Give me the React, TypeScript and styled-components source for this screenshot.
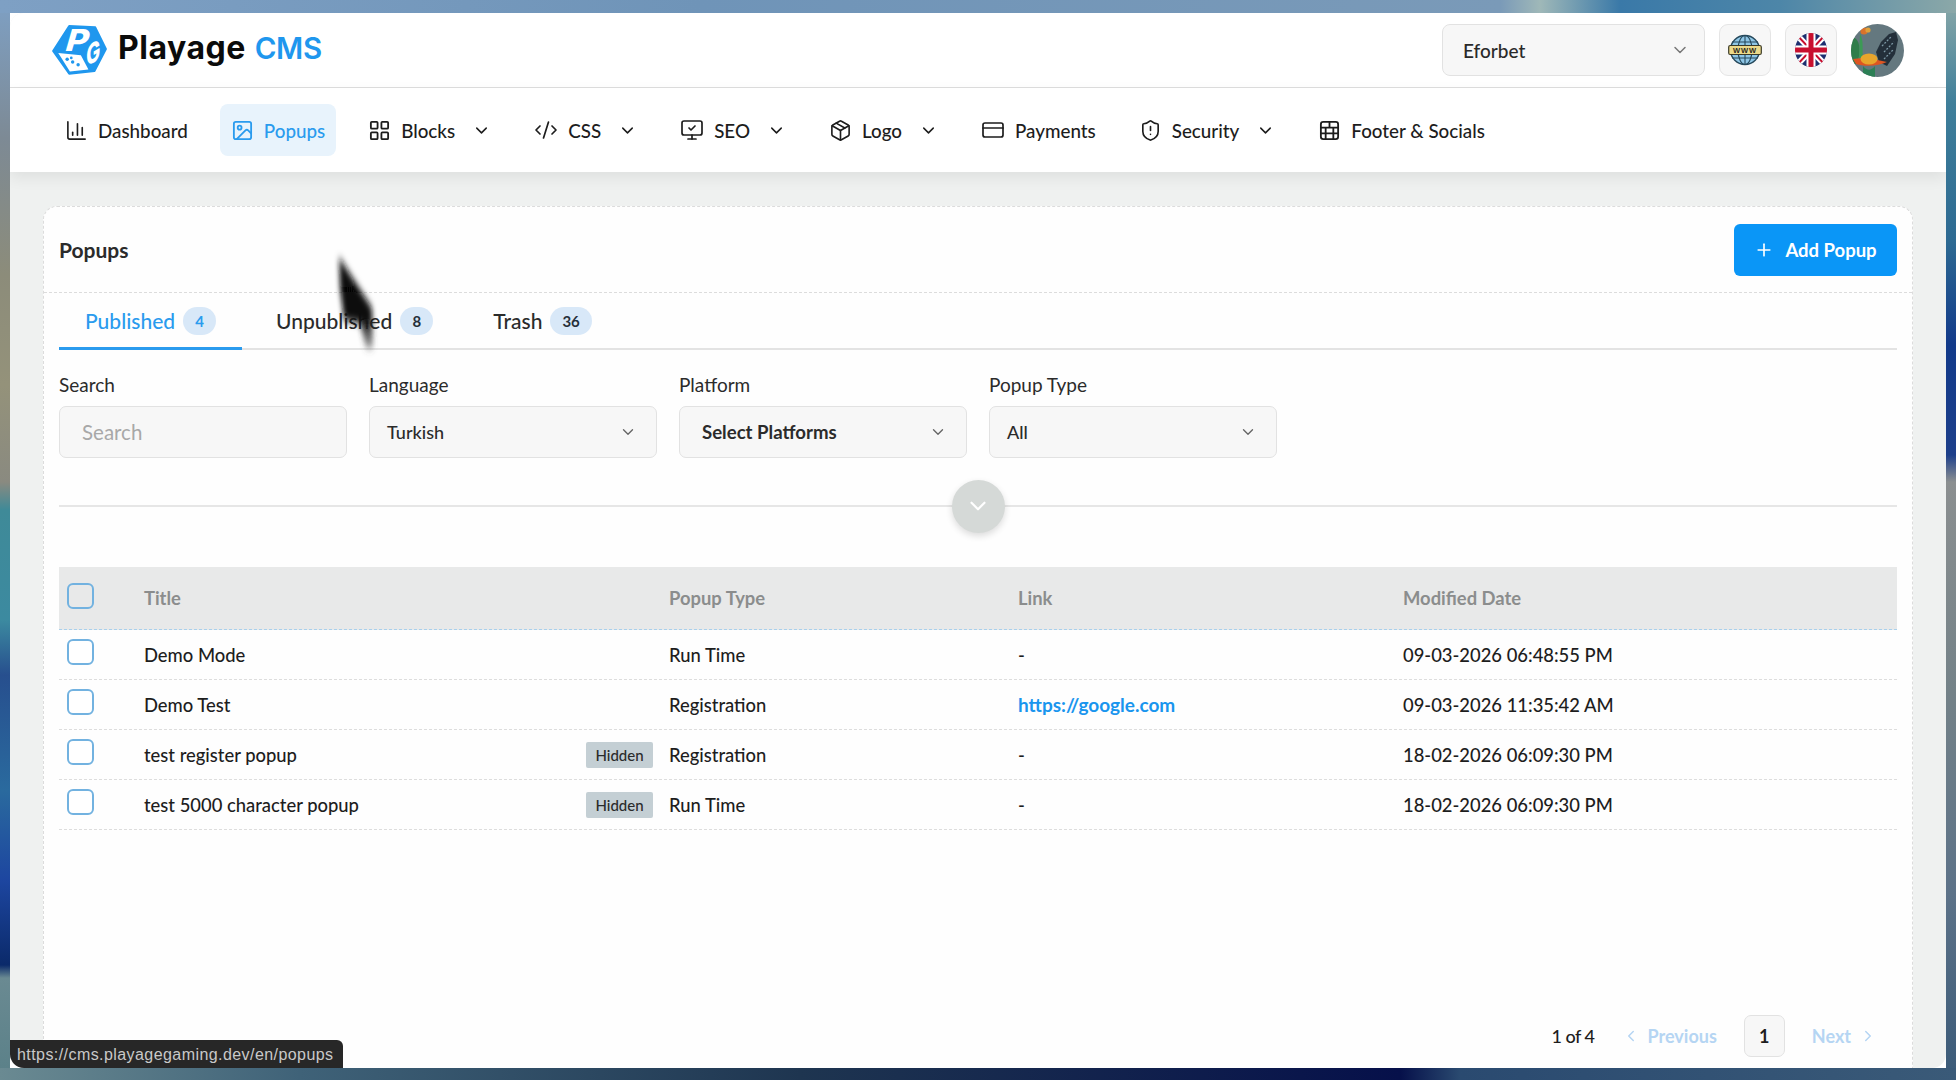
import React from "react";
import styled, { createGlobalStyle } from "styled-components";
import {
  ChartColumn,
  ChevronDown,
  ChevronLeft,
  ChevronRight,
  CodeXml,
  CreditCard,
  Image as ImageIcon,
  LayoutGrid,
  MonitorCheck,
  Package,
  Plus,
  ShieldAlert,
} from "lucide-react";

const GlobalStyle = createGlobalStyle`
  html, body {
    margin: 0;
    padding: 0;
    height: 100%;
  }
  body {
    font-family: "Lato", "Noto Sans", sans-serif;
    color: #1c1c1c;
    overflow: hidden;
  }
  * {
    box-sizing: border-box;
  }
`;

const Desktop = styled.div`
  width: 1956px;
  height: 1080px;
  padding: 13px 10px 12px;
  background:
    linear-gradient(90deg, #7ea0c4 0, #6f94b8 700px, #7a9ab8 1500px, #9fb8b8 1540px, #3a79a8 1620px, #4d86a8 1780px, #8ba8a8 1956px) top / 100% 13px no-repeat,
    linear-gradient(90deg, #6a8a92 0, #3f6278 300px, #1e3550 800px, #06104a 1400px, #2a4a70 1460px, #3a5a78 1956px) bottom / 100% 12px no-repeat,
    linear-gradient(180deg, #7ea0c4 0, #7d8a95 138px, #8c8c7a 275px, #94927a 385px, #8a8a80 482px, #3f8a98 510px, #3c8aa0 620px, #274f8e 675px, #2a6a9e 790px, #1d46a0 880px, #0b2a6a 965px, #6a8a92 978px, #5a8088 1080px) left / 10px 100% no-repeat,
    linear-gradient(180deg, #8aa8a8 0, #3f7f9a 103px, #2d6a92 240px, #123a8a 345px, #1d3f8a 455px, #8b8f90 482px, #748288 690px, #5c7288 895px, #3a5a78 1080px) right / 10px 100% no-repeat;
`;

const Browser = styled.div`
  position: relative;
  width: 1936px;
  height: 1055px;
  display: flex;
  flex-direction: column;
  background: #eff1f0;
  border-radius: 14px;
  overflow: hidden;
`;

const TopBar = styled.header`
  height: 75px;
  flex: none;
  display: flex;
  align-items: center;
  justify-content: space-between;
  padding: 0 42px;
  background: #fff;
  border-bottom: 1px solid #dedede;
`;

const Brand = styled.div`
  display: flex;
  align-items: center;
  gap: 11px;
`;

const BrandMark = styled.svg`
  overflow: visible;
`;

const BrandText = styled.div`
  padding-bottom: 5px;
`;

const BrandName = styled.span`
  font-family: "Inter", sans-serif;
  font-size: 32px;
  font-weight: 700;
  letter-spacing: 0.5px;
  color: #0b0b0b;
`;

const BrandAccent = styled.span`
  font-family: "Inter", sans-serif;
  font-size: 29.5px;
  font-weight: 600;
  margin-left: 9px;
  letter-spacing: -0.4px;
  color: #1f97ee;
`;

const TopActions = styled.div`
  display: flex;
  align-items: center;
`;

const SiteSelect = styled.div`
  width: 263px;
  height: 52px;
  display: flex;
  align-items: center;
  justify-content: space-between;
  padding: 0 14px 0 20px;
  margin-right: 14px;
  background: #f7f7f7;
  border: 1px solid #e2e2e2;
  border-radius: 8px;
  font-size: 19px;
  font-weight: 500;
  color: #2a2a2a;
`;

const IconTile = styled.div`
  width: 52px;
  height: 52px;
  display: flex;
  align-items: center;
  justify-content: center;
  margin-right: 14px;
  background: #f7f7f7;
  border: 1px solid #e5e5e5;
  border-radius: 9px;
`;

const Avatar = styled.svg`
  width: 53px;
  height: 53px;
  border-radius: 50%;
  display: block;
`;

const NavBar = styled.nav`
  position: relative;
  height: 84px;
  flex: none;
  display: flex;
  align-items: center;
  gap: 21px;
  padding: 0 44px;
  background: #fff;
  box-shadow: 0 6px 14px rgba(0, 0, 0, 0.07);
`;

const NavItem = styled.div<{ $active?: boolean }>`
  height: 52px;
  display: flex;
  align-items: center;
  gap: 10px;
  padding: 0 11px;
  border-radius: 8px;
  font-size: 18.8px;
  font-weight: 500;
  color: ${(p) => (p.$active ? "#2a9bee" : "#1d1d1d")};
  background: ${(p) => (p.$active ? "#e8f3fc" : "transparent")};
`;

const NavCaret = styled.span`
  display: flex;
  margin-left: 7px;
`;

const Main = styled.main`
  flex: 1;
  min-height: 0;
  display: flex;
  padding: 34px 33px 0;
`;

const Card = styled.section`
  flex: 1;
  display: flex;
  flex-direction: column;
  padding: 0 15px 11px;
  background: #fefefe;
  border: 1px dashed #dcdcdc;
  border-bottom: none;
  border-radius: 14px 14px 0 0;
`;

const CardHead = styled.div`
  height: 86px;
  margin: 0 -15px;
  padding: 0 15px;
  flex: none;
  display: flex;
  align-items: center;
  justify-content: space-between;
  border-bottom: 1px dashed #dcdcdc;
`;

const CardTitle = styled.h1`
  margin: 0;
  font-size: 21px;
  font-weight: 700;
  color: #2b2b2b;
`;

const AddButton = styled.button`
  width: 163px;
  height: 52px;
  display: flex;
  align-items: center;
  justify-content: center;
  gap: 11px;
  border: none;
  border-radius: 6px;
  background: #0a96f7;
  color: #fff;
  font-family: inherit;
  font-size: 18.5px;
  font-weight: 700;
`;

const TabRow = styled.div`
  height: 57px;
  flex: none;
  display: flex;
  gap: 8px;
  border-bottom: 2px solid #e3e3e3;
`;

const Tab = styled.div<{ $active?: boolean }>`
  height: 57px;
  display: flex;
  align-items: center;
  gap: 8px;
  padding: 1px 26px 0;
  font-size: 21px;
  font-weight: 500;
  color: ${(p) => (p.$active ? "#2a9bee" : "#2b2b2b")};
  border-bottom: 3px solid ${(p) => (p.$active ? "#2a9bee" : "transparent")};
`;

const Count = styled.span<{ $active?: boolean }>`
  min-width: 33px;
  height: 28px;
  padding: 0 12px;
  display: flex;
  align-items: center;
  justify-content: center;
  border-radius: 14px;
  background: #d8e8f8;
  font-size: 15px;
  font-weight: 700;
  color: ${(p) => (p.$active ? "#2a9bee" : "#26303a")};
`;

const Filters = styled.div`
  display: grid;
  grid-template-columns: repeat(4, 288px);
  gap: 22px;
  margin-top: 22px;
`;

const Field = styled.div`
  display: flex;
  flex-direction: column;
  gap: 9px;
`;

const FieldLabel = styled.label`
  height: 25px;
  line-height: 25px;
  font-size: 19px;
  color: #2b2b2b;
`;

const SelectBox = styled.div<{ $bold?: boolean; $inset: number }>`
  height: 52px;
  display: flex;
  align-items: center;
  justify-content: space-between;
  padding: 0 19px 0 ${(p) => p.$inset}px;
  background: #f7f7f7;
  border: 1px solid #e2e2e2;
  border-radius: 7px;
  font-size: ${(p) => (p.$bold ? "18.6px" : "18px")};
  font-weight: ${(p) => (p.$bold ? 700 : 500)};
  color: #2b2b2b;
`;

const SearchBox = styled(SelectBox)`
  font-size: 20.5px;
  font-weight: 400;
  color: #a8a8a8;
`;

const Divider = styled.div`
  height: 2px;
  flex: none;
  margin-top: 47px;
  background: #e6e6e6;
  display: flex;
  align-items: center;
  justify-content: center;
`;

const CollapseToggle = styled.div`
  width: 53px;
  height: 53px;
  flex: none;
  display: flex;
  align-items: center;
  justify-content: center;
  border-radius: 50%;
  background: #d5d9d7;
  box-shadow: 0 3px 7px rgba(0, 0, 0, 0.14);
`;

const TableGrid = styled.div`
  flex: 1;
  margin-top: 60px;
`;

const Row = styled.div<{ $head?: boolean }>`
  display: grid;
  grid-template-columns: 85px 525px 349px 385px 1fr;
  align-items: center;
  height: ${(p) => (p.$head ? "63px" : "50px")};
  background: ${(p) => (p.$head ? "#e8e9e9" : "transparent")};
  border-bottom: 1px dashed ${(p) => (p.$head ? "#a9d0ec" : "#dddddd")};
  font-size: 18.4px;
  font-weight: ${(p) => (p.$head ? 700 : 500)};
  color: ${(p) => (p.$head ? "#8b8d8d" : "#1d1d1d")};
`;

const CheckCell = styled.div`
  padding-left: 8px;
  display: flex;
  padding-bottom: 5px;
`;

const CheckBox = styled.span`
  width: 27px;
  height: 26px;
  border: 2px solid #72b2e0;
  border-radius: 6px;
  background: #fff;
`;

const HeadCheckBox = styled(CheckBox)`
  background: transparent;
`;

const TitleCell = styled.div`
  display: flex;
  align-items: center;
  justify-content: space-between;
  padding-right: 16px;
`;

const HiddenTag = styled.span`
  width: 67px;
  height: 26px;
  display: flex;
  align-items: center;
  justify-content: center;
  background: #c4cfd4;
  border-radius: 2px;
  font-size: 15px;
  color: #2b2b2b;
`;

const RowLink = styled.a`
  font-size: 19px;
  font-weight: 700;
  color: #1995ee;
  text-decoration: none;
`;

const Pager = styled.div`
  flex: none;
  display: flex;
  align-items: center;
  justify-content: flex-end;
  height: 42px;
  padding-right: 20px;
  font-size: 18px;
  font-weight: 500;
`;

const PageInfo = styled.span`
  color: #1d1d1d;
  margin-right: 27px;
  letter-spacing: -0.5px;
`;

const PagerLink = styled.span`
  display: flex;
  align-items: center;
  gap: 8px;
  font-weight: 700;
  color: #b5d5f3;
`;

const PageBox = styled.span`
  width: 41px;
  height: 42px;
  margin: 0 27px;
  display: flex;
  align-items: center;
  justify-content: center;
  background: #f7f7f7;
  border: 1px solid #e2e2e2;
  border-radius: 7px;
  font-weight: 700;
  color: #1d1d1d;
`;

// link preview the browser shows while hovering a nav item
const StatusTip = styled.div`
  position: absolute;
  left: 0;
  bottom: 0;
  width: 333px;
  height: 28px;
  display: flex;
  align-items: center;
  padding: 2px 0 0 7px;
  background: #272727;
  border-radius: 0 6px 0 10px;
  font-family: "Liberation Sans", sans-serif;
  font-size: 16px;
  letter-spacing: 0.43px;
  color: #c9c9c9;
`;

const CursorTrail = styled.svg`
  position: absolute;
  left: 320px;
  top: 235px;
`;

function FooterIcon() {
  return (
    <svg width="23" height="23" viewBox="0 0 24 24" fill="none" stroke="#1d1d1d" strokeWidth="1.9" strokeLinecap="round" strokeLinejoin="round">
      <rect x="3" y="3" width="18" height="18" rx="2.5" />
      <path d="M3 9h18M3 15h18M12 3v6M8 15v6M16 15v6M8 9v6M16 9v6" />
    </svg>
  );
}

function Logo() {
  return (
    <BrandMark width="55" height="50" viewBox="0 0 160 146">
      <path d="M50 3 L126 7 L157 70 L124 134 L50 142 L3 76 Z" fill="#1f97ee" stroke="#1f97ee" strokeWidth="6" strokeLinejoin="round" />
      <path d="M18 82 L84 88 L106 130 L52 136 Z" fill="#fff" />
      <text x="0" y="0" transform="translate(34 76) skewX(-16) scale(1.2 1.05)" fontFamily="Inter, sans-serif" fontWeight="800" fontSize="84" fill="#fff">
        P
      </text>
      <text x="0" y="0" transform="translate(100 122) skewY(-30) scale(0.8 1.2)" fontFamily="Inter, sans-serif" fontWeight="800" fontSize="68" fill="#fff">
        G
      </text>
      <circle cx="44" cy="100" r="5" fill="#1f97ee" />
      <circle cx="60" cy="108" r="5" fill="#1f97ee" />
      <circle cx="76" cy="116" r="5" fill="#1f97ee" />
      <circle cx="56" cy="96" r="4" fill="#1f97ee" />
    </BrandMark>
  );
}

function GlobeIcon() {
  return (
    <svg width="34" height="32" viewBox="0 0 34 32">
      <circle cx="17" cy="16" r="14.5" fill="#8ec6e6" stroke="#26495c" strokeWidth="1.4" />
      <g fill="none" stroke="#26495c" strokeWidth="1.1">
        <ellipse cx="17" cy="16" rx="7" ry="14.5" />
        <path d="M17 1.5v29M4 8h26M4 24h26" />
      </g>
      <rect x="0.7" y="11.5" width="32.6" height="9" rx="1.5" fill="#ecd98a" stroke="#3a3a28" strokeWidth="1.2" />
      <text x="17" y="19" textAnchor="middle" fontFamily="Liberation Sans, sans-serif" fontSize="7.5" fontWeight="700" letterSpacing="1" fill="#2b2b1e">
        WWW
      </text>
    </svg>
  );
}

function FlagIcon() {
  return (
    <svg width="32" height="34" viewBox="0 0 32 34">
      <defs>
        <clipPath id="flagClip">
          <ellipse cx="16" cy="17" rx="16" ry="17" />
        </clipPath>
      </defs>
      <g clipPath="url(#flagClip)">
        <rect width="32" height="34" fill="#1d2f6f" />
        <path d="M0 0L32 34M32 0L0 34" stroke="#fff" strokeWidth="6" />
        <path d="M0 0L32 34M32 0L0 34" stroke="#c8102e" strokeWidth="2" />
        <path d="M16 0v34M0 17h32" stroke="#fff" strokeWidth="9" />
        <path d="M16 0v34M0 17h32" stroke="#c8102e" strokeWidth="5" />
      </g>
    </svg>
  );
}

function AvatarArt() {
  return (
    <Avatar viewBox="0 0 53 53">
      <rect width="53" height="53" fill="#64787f" />
      <path d="M0 14 C6 12 10 20 8 32 L6 40 L0 40 Z" fill="#2f7d4a" />
      <path d="M9 10 C13 16 11 26 12 34 L8 34 Z" fill="#3c9a55" />
      <circle cx="13" cy="7" r="3.6" fill="#d9722a" />
      <circle cx="17" cy="6" r="2.6" fill="#e0a13a" />
      <path d="M25 28 L30 18 L38 10 L45 8 L47 16 L44 30 L36 42 L28 38 Z" fill="#232f3a" />
      <path d="M31 22l9-9M33 28l10-10M33 35l9-9" stroke="#7d99a6" strokeWidth="1.3" strokeDasharray="2 1.5" />
      <path d="M2 35 C12 33 22 35 36 38 C28 42 14 43 5 40 Z" fill="#dd5522" />
      <ellipse cx="18" cy="35" rx="8.5" ry="5.5" fill="#e8a52c" />
      <path d="M12 42 C16 47 20 47 24 42 L24 53 L12 53 Z" fill="#2c7f55" />
    </Avatar>
  );
}

const navItems = [
  { label: "Dashboard", icon: <ChartColumn size={23} strokeWidth={1.7} /> },
  { label: "Popups", icon: <ImageIcon size={23} strokeWidth={1.9} />, active: true },
  { label: "Blocks", icon: <LayoutGrid size={23} strokeWidth={1.9} />, caret: true },
  { label: "CSS", icon: <CodeXml size={24} strokeWidth={1.7} />, caret: true },
  { label: "SEO", icon: <MonitorCheck size={24} strokeWidth={1.7} />, caret: true },
  { label: "Logo", icon: <Package size={23} strokeWidth={1.7} />, caret: true },
  { label: "Payments", icon: <CreditCard size={24} strokeWidth={1.7} /> },
  { label: "Security", icon: <ShieldAlert size={23} strokeWidth={1.7} />, caret: true },
  { label: "Footer & Socials", icon: <FooterIcon /> },
];

const rows = [
  { title: "Demo Mode", type: "Run Time", link: "-", date: "09-03-2026 06:48:55 PM" },
  { title: "Demo Test", type: "Registration", link: "https://google.com", date: "09-03-2026 11:35:42 AM" },
  { title: "test register popup", hidden: true, type: "Registration", link: "-", date: "18-02-2026 06:09:30 PM" },
  { title: "test 5000 character popup", hidden: true, type: "Run Time", link: "-", date: "18-02-2026 06:09:30 PM" },
];

export default function App() {
  return (
    <>
      <GlobalStyle />
      <Desktop>
        <Browser>
          <TopBar>
            <Brand>
              <Logo />
              <BrandText>
                <BrandName>Playage</BrandName>
                <BrandAccent>CMS</BrandAccent>
              </BrandText>
            </Brand>
            <TopActions>
              <SiteSelect>
                Eforbet
                <ChevronDown size={20} color="#777" strokeWidth={1.8} />
              </SiteSelect>
              <IconTile>
                <GlobeIcon />
              </IconTile>
              <IconTile>
                <FlagIcon />
              </IconTile>
              <AvatarArt />
            </TopActions>
          </TopBar>

          <NavBar>
            {navItems.map((item) => (
              <NavItem key={item.label} $active={item.active}>
                {item.icon}
                {item.label}
                {item.caret && (
                  <NavCaret>
                    <ChevronDown size={19} strokeWidth={1.9} />
                  </NavCaret>
                )}
              </NavItem>
            ))}
          </NavBar>

          <Main>
            <Card>
              <CardHead>
                <CardTitle>Popups</CardTitle>
                <AddButton>
                  <Plus size={20} strokeWidth={2} />
                  Add Popup
                </AddButton>
              </CardHead>

              <TabRow>
                <Tab $active>
                  Published <Count $active>4</Count>
                </Tab>
                <Tab>
                  Unpublished <Count>8</Count>
                </Tab>
                <Tab>
                  Trash <Count>36</Count>
                </Tab>
              </TabRow>

              <Filters>
                <Field>
                  <FieldLabel>Search</FieldLabel>
                  <SearchBox $inset={22}>Search</SearchBox>
                </Field>
                <Field>
                  <FieldLabel>Language</FieldLabel>
                  <SelectBox $inset={17}>
                    Turkish
                    <ChevronDown size={18} color="#666" strokeWidth={1.8} />
                  </SelectBox>
                </Field>
                <Field>
                  <FieldLabel>Platform</FieldLabel>
                  <SelectBox $bold $inset={22}>
                    Select Platforms
                    <ChevronDown size={18} color="#666" strokeWidth={1.8} />
                  </SelectBox>
                </Field>
                <Field>
                  <FieldLabel>Popup Type</FieldLabel>
                  <SelectBox $inset={17}>
                    All
                    <ChevronDown size={18} color="#666" strokeWidth={1.8} />
                  </SelectBox>
                </Field>
              </Filters>

              <Divider>
                <CollapseToggle>
                  <ChevronDown size={26} color="#fff" strokeWidth={2} />
                </CollapseToggle>
              </Divider>

              <TableGrid>
                <Row $head>
                  <CheckCell>
                    <HeadCheckBox />
                  </CheckCell>
                  <div>Title</div>
                  <div>Popup Type</div>
                  <div>Link</div>
                  <div>Modified Date</div>
                </Row>
                {rows.map((row) => (
                  <Row key={row.title}>
                    <CheckCell>
                      <CheckBox />
                    </CheckCell>
                    <TitleCell>
                      {row.title}
                      {row.hidden && <HiddenTag>Hidden</HiddenTag>}
                    </TitleCell>
                    <div>{row.type}</div>
                    <div>{row.link === "-" ? "-" : <RowLink href={row.link}>{row.link}</RowLink>}</div>
                    <div>{row.date}</div>
                  </Row>
                ))}
              </TableGrid>

              <Pager>
                <PageInfo>1 of 4</PageInfo>
                <PagerLink>
                  <ChevronLeft size={18} strokeWidth={2} />
                  Previous
                </PagerLink>
                <PageBox>1</PageBox>
                <PagerLink>
                  Next
                  <ChevronRight size={18} strokeWidth={2} />
                </PagerLink>
              </Pager>
            </Card>
          </Main>

          <StatusTip>https://cms.playagegaming.dev/en/popups</StatusTip>

          <CursorTrail width="70" height="125" viewBox="0 0 70 125">
            <defs>
              <filter id="trailBlur" x="-30%" y="-20%" width="160%" height="140%">
                <feGaussianBlur stdDeviation="2.5 4" />
              </filter>
              <linearGradient id="trailFade" x1="0" y1="0" x2="0" y2="1">
                <stop offset="0" stopColor="#1a1a1a" />
                <stop offset="0.35" stopColor="#050505" />
                <stop offset="0.7" stopColor="#111" />
                <stop offset="1" stopColor="#555" stopOpacity="0.55" />
              </linearGradient>
            </defs>
            <path d="M9 9 L42 60 L43 100 L36 100 L30 75 L14 72 L10 40 Z" fill="url(#trailFade)" filter="url(#trailBlur)" />
          </CursorTrail>
        </Browser>
      </Desktop>
    </>
  );
}
